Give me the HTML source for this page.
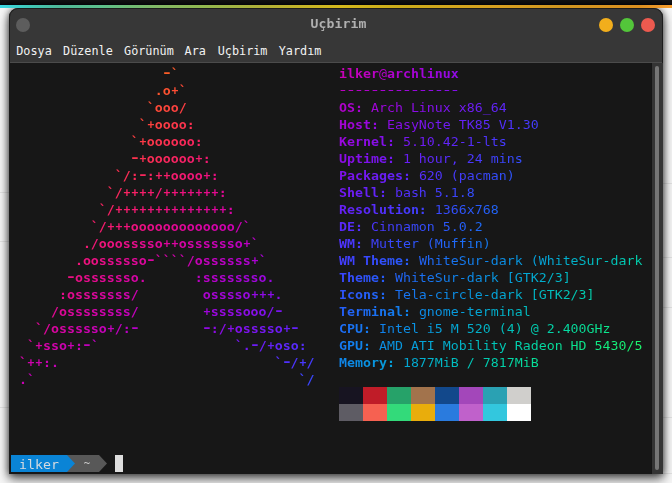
<!DOCTYPE html>
<html lang="tr">
<head>
<meta charset="utf-8">
<title>Uçbirim</title>
<style>
html,body{margin:0;padding:0}
body{width:672px;height:483px;overflow:hidden;position:relative;background:#f6f6f6;font-family:"DejaVu Sans Mono", "Liberation Mono", monospace}
.topblack{position:absolute;left:0;top:0;width:672px;height:5px;background:linear-gradient(180deg,#131313,#0d0d0f 60%,#05050c)}
.grad{position:absolute;left:0;top:4.5px;width:672px;height:3.7px;z-index:2;background:linear-gradient(90deg,#3cd8e4 0px,#40c8b8 30px,#50b898 60px,#5cc08c 100px,#70bc74 130px,#84b864 160px,#90b850 200px,#b0b038 260px,#c4b428 300px,#d4b81c 340px,#ccac1a 400px,#d8a020 500px,#d09620 560px,#dc9020 640px,#f09a2c 662px,#f8a030 672px)}
.win{position:absolute;left:9px;top:8px;width:654px;height:466px;border-radius:9px 9px 0 0;background:#171717;box-shadow:0 5px 11px 0 rgba(0,0,0,.6),0 0 7px 0 rgba(0,0,0,.55);overflow:hidden}
.head{position:absolute;left:0;top:0;width:654px;height:54px;background:#373737;border-bottom:1px solid #4b4b4b}
.edge{position:absolute;left:0;top:0;width:652px;height:480px;border:1px solid #1c1c1c;border-radius:9px 9px 0 0;pointer-events:none}
.title{position:absolute;left:0;top:8px;width:672px;height:32px;line-height:32px;text-align:center;color:#b0b0b0;font-weight:bold;font-size:13.1px;letter-spacing:.1px;text-indent:5px;transform-origin:0 20px;transform:scaleY(.93)}
.dot{position:absolute;width:14px;height:14px;border-radius:50%;top:18px}
.menu{position:absolute;top:41px;left:16.25px;height:20px;line-height:20px;font-size:11.8px;color:#f2f2f2;white-space:pre}
.menu span{position:absolute;top:0}
.r{position:absolute;height:17px;line-height:17px;font-size:13.288px;white-space:pre;transform-origin:0 13px;transform:scaleY(.92)}
.r.g{color:transparent;-webkit-background-clip:text;background-clip:text;background-repeat:no-repeat}
.r i{font-style:normal}
.r i.p{display:inline-block;transform:scaleX(.86)}
.r i.d{display:inline-block;transform:scaleX(1.36) translateY(-.7px)}
.r b,.b{font-weight:bold}
.ln{position:absolute;width:17px;height:1px;background:#e3e3e3}
.blk{position:absolute;width:24px;height:17px}
.sbtrack{position:absolute;left:651px;top:63px;width:11px;height:411px;background:#343434;border-left:1px solid #151515}
.sbthumb{position:absolute;left:655px;top:66px;width:4px;height:404px;border-radius:2px;background:#767676}
.seg{position:absolute;top:455px;height:17px}
</style>
</head>
<body>
<div class="topblack"></div>
<div class="grad"></div>
<div class="ln" style="left:0;top:192px"></div><div class="ln" style="left:0;top:241px"></div><div class="ln" style="left:0;top:407px"></div>
<div class="ln" style="left:655px;top:183px"></div><div class="ln" style="left:655px;top:257px"></div><div class="ln" style="left:655px;top:307px"></div><div class="ln" style="left:655px;top:417px"></div><div class="ln" style="left:655px;top:473px"></div>
<div class="win"><div class="head"></div><div class="edge"></div></div>
<div class="title">Uçbirim</div>
<div class="dot" style="left:16px;background:#5d5d5d"></div>
<div class="dot" style="left:599px;background:#f2ae1c"></div>
<div class="dot" style="left:620px;background:#53c63a"></div>
<div class="dot" style="left:641px;background:#ec5a4f"></div>
<div class="menu"><span style="left:0">Dosya</span><span style="left:46.8px">Düzenle</span><span style="left:107.8px">Görünüm</span><span style="left:168.3px">Ara</span><span style="left:201.5px">Uçbirim</span><span style="left:262.5px">Yardım</span></div>
<div class="r g b" style="top:65px;left:11px;background-image:linear-gradient(90deg,#cfae02 0px,#d5a603 16px,#db9e06 32px,#e19508 48px,#e68d0b 64px,#eb850f 80px,#ef7c13 96px,#f37418 112px,#f66b1d 128px,#f96323 144px,#fb5b29 160px,#fd532f 176px)">                   <i class="d" style="color:#fb5d27">-</i>`</div>
<div class="r g b" style="top:82px;left:11px;background-image:linear-gradient(90deg,#d8a204 0px,#de9a07 16px,#e4910a 32px,#e8890d 48px,#ed8011 64px,#f17815 80px,#f5701a 96px,#f86720 112px,#fa5f25 128px,#fc572c 144px,#fd4f32 160px,#fe4739 176px)">                  .o<i class="p" style="color:#fe4d34">+</i>`</div>
<div class="r g b" style="top:99px;left:11px;background-image:linear-gradient(90deg,#e19508 0px,#e68d0b 16px,#eb850f 32px,#ef7c13 48px,#f37418 64px,#f66b1d 80px,#f96323 96px,#fb5b29 112px,#fd532f 128px,#fe4b36 144px,#fe433d 160px,#fe3c44 176px)">                 `ooo/</div>
<div class="r g b" style="top:116px;left:11px;background-image:linear-gradient(90deg,#e8890d 0px,#ed8011 16px,#f17815 32px,#f5701a 48px,#f86720 64px,#fa5f25 80px,#fc572c 96px,#fd4f32 112px,#fe4739 128px,#fe4040 144px,#fe3948 160px,#fd324f 176px,#fc2b57 192px)">                `<i class="p" style="color:#fe423e">+</i>oooo:</div>
<div class="r g b" style="top:133px;left:11px;background-image:linear-gradient(90deg,#ef7c13 0px,#f37418 16px,#f66b1d 32px,#f96323 48px,#fb5b29 64px,#fd532f 80px,#fe4b36 96px,#fe433d 112px,#fe3c44 128px,#fe354c 144px,#fd2e53 160px,#fb285b 176px,#f92264 192px)">               `<i class="p" style="color:#fe3a46">+</i>oooooo:</div>
<div class="r g b" style="top:150px;left:11px;background-image:linear-gradient(90deg,#f5701a 0px,#f86720 16px,#fa5f25 32px,#fc572c 48px,#fd4f32 64px,#fe4739 80px,#fe4040 96px,#fe3948 112px,#fd324f 128px,#fc2b57 144px,#fa2560 160px,#f71f68 176px,#f41a70 192px,#f11579 208px)">               <i class="d" style="color:#fe334e">-</i><i class="p" style="color:#fd3051">+</i>oooooo<i class="p" style="color:#f51b6e">+</i>:</div>
<div class="r g b" style="top:167px;left:11px;background-image:linear-gradient(90deg,#f96323 0px,#fb5b29 16px,#fd532f 32px,#fe4b36 48px,#fe433d 64px,#fe3c44 80px,#fe354c 96px,#fd2e53 112px,#fb285b 128px,#f92264 144px,#f61d6c 160px,#f31874 176px,#ef137d 192px,#ea0f85 208px)">             `/:<i class="d" style="color:#fa275d">-</i>:<i class="p" style="color:#f82166">+</i><i class="p" style="color:#f71e6a">+</i>oooo<i class="p" style="color:#ee127f">+</i>:</div>
<div class="r g b" style="top:184px;left:11px;background-image:linear-gradient(90deg,#fc572c 0px,#fd4f32 16px,#fe4739 32px,#fe4040 48px,#fe3948 64px,#fd324f 80px,#fc2b57 96px,#fa2560 112px,#f71f68 128px,#f41a70 144px,#f11579 160px,#ed1181 176px,#e80d8a 192px,#e30992 208px,#de079a 224px)">            `/<i class="p" style="color:#f92462">+</i><i class="p" style="color:#f82166">+</i><i class="p" style="color:#f71e6a">+</i><i class="p" style="color:#f51b6e">+</i>/<i class="p" style="color:#f21676">+</i><i class="p" style="color:#f0147b">+</i><i class="p" style="color:#ee127f">+</i><i class="p" style="color:#ec1083">+</i><i class="p" style="color:#e90e87">+</i><i class="p" style="color:#e70c8c">+</i><i class="p" style="color:#e40a90">+</i>:</div>
<div class="r g b" style="top:201px;left:11px;background-image:linear-gradient(90deg,#fe4b36 0px,#fe433d 16px,#fe3c44 32px,#fe354c 48px,#fd2e53 64px,#fb285b 80px,#f92264 96px,#f61d6c 112px,#f31874 128px,#ef137d 144px,#ea0f85 160px,#e60b8e 176px,#e00896 192px,#db059e 208px,#d503a7 224px)">           `/<i class="p" style="color:#f71e6a">+</i><i class="p" style="color:#f51b6e">+</i><i class="p" style="color:#f41972">+</i><i class="p" style="color:#f21676">+</i><i class="p" style="color:#f0147b">+</i><i class="p" style="color:#ee127f">+</i><i class="p" style="color:#ec1083">+</i><i class="p" style="color:#e90e87">+</i><i class="p" style="color:#e70c8c">+</i><i class="p" style="color:#e40a90">+</i><i class="p" style="color:#e20994">+</i><i class="p" style="color:#df0798">+</i><i class="p" style="color:#dc069c">+</i><i class="p" style="color:#d905a0">+</i>:</div>
<div class="r g b" style="top:218px;left:11px;background-image:linear-gradient(90deg,#fe4040 0px,#fe3948 16px,#fd324f 32px,#fc2b57 48px,#fa2560 64px,#f71f68 80px,#f41a70 96px,#f11579 112px,#ed1181 128px,#e80d8a 144px,#e30992 160px,#de079a 176px,#d804a2 192px,#d103ab 208px,#cb01b2 224px,#c401ba 240px)">          `/<i class="p" style="color:#f41972">+</i><i class="p" style="color:#f21676">+</i><i class="p" style="color:#f0147b">+</i>ooooooooooooo/`</div>
<div class="r g b" style="top:235px;left:11px;background-image:linear-gradient(90deg,#fe354c 0px,#fd2e53 16px,#fb285b 32px,#f92264 48px,#f61d6c 64px,#f31874 80px,#ef137d 96px,#ea0f85 112px,#e60b8e 128px,#e00896 144px,#db059e 160px,#d503a7 176px,#ce02ae 192px,#c701b6 208px,#c001be 224px,#b901c5 240px,#b101cc 256px)">         ./ooosssso<i class="p" style="color:#dc069c">+</i><i class="p" style="color:#d905a0">+</i>osssssso<i class="p" style="color:#bb01c3">+</i>`</div>
<div class="r g b" style="top:252px;left:11px;background-image:linear-gradient(90deg,#fc2b57 0px,#fa2560 16px,#f71f68 32px,#f41a70 48px,#f11579 64px,#ed1181 80px,#e80d8a 96px,#e30992 112px,#de079a 128px,#d804a2 144px,#d103ab 160px,#cb01b2 176px,#c401ba 192px,#bd01c1 208px,#b501c8 224px,#ad02cf 240px,#a504d6 256px)">        .oossssso<i class="d" style="color:#d905a0">-</i>````/ossssss<i class="p" style="color:#ab02d1">+</i>`</div>
<div class="r g b" style="top:269px;left:11px;background-image:linear-gradient(90deg,#f92264 0px,#f61d6c 16px,#f31874 32px,#ef137d 48px,#ea0f85 64px,#e60b8e 80px,#e00896 96px,#db059e 112px,#d503a7 128px,#ce02ae 144px,#c701b6 160px,#c001be 176px,#b901c5 192px,#b101cc 208px,#a903d3 224px,#a105d9 240px,#9907df 256px,#910ae4 272px)">       <i class="d" style="color:#ec1083">-</i>osssssso.      :ssssssso.</div>
<div class="r g b" style="top:286px;left:11px;background-image:linear-gradient(90deg,#f41a70 0px,#f11579 16px,#ed1181 32px,#e80d8a 48px,#e30992 64px,#de079a 80px,#d804a2 96px,#d103ab 112px,#cb01b2 128px,#c401ba 144px,#bd01c1 160px,#b501c8 176px,#ad02cf 192px,#a504d6 208px,#9d06dc 224px,#9508e1 240px,#8c0ce6 256px,#840feb 272px)">      :osssssss/        osssso<i class="p" style="color:#9309e3">+</i><i class="p" style="color:#8e0be5">+</i><i class="p" style="color:#8a0de8">+</i>.</div>
<div class="r g b" style="top:303px;left:11px;background-image:linear-gradient(90deg,#ef137d 0px,#ea0f85 16px,#e60b8e 32px,#e00896 48px,#db059e 64px,#d503a7 80px,#ce02ae 96px,#c701b6 112px,#c001be 128px,#b901c5 144px,#b101cc 160px,#a903d3 176px,#a105d9 192px,#9907df 208px,#910ae4 224px,#880de9 240px,#8011ed 256px,#7716f1 272px)">     /ossssssss/        <i class="p" style="color:#9f05da">+</i>ssssooo/<i class="d" style="color:#7915f0">-</i></div>
<div class="r g b" style="top:320px;left:11px;background-image:linear-gradient(90deg,#e80d8a 0px,#e30992 16px,#de079a 32px,#d804a2 48px,#d103ab 64px,#cb01b2 80px,#c401ba 96px,#bd01c1 112px,#b501c8 128px,#ad02cf 144px,#a504d6 160px,#9d06dc 176px,#9508e1 192px,#8c0ce6 208px,#840feb 224px,#7b14ef 240px,#7318f3 256px,#6b1df6 272px,#6223f9 288px)">   `/ossssso<i class="p" style="color:#c201bc">+</i>/:<i class="d" style="color:#b701c7">-</i>        <i class="d" style="color:#9309e3">-</i>:/<i class="p" style="color:#860eea">+</i>osssso<i class="p" style="color:#691ff7">+</i><i class="d" style="color:#6422f9">-</i></div>
<div class="r g b" style="top:337px;left:11px;background-image:linear-gradient(90deg,#e00896 0px,#db059e 16px,#d503a7 32px,#ce02ae 48px,#c701b6 64px,#c001be 80px,#b901c5 96px,#b101cc 112px,#a903d3 128px,#a105d9 144px,#9907df 160px,#910ae4 176px,#880de9 192px,#8011ed 208px,#7716f1 224px,#6f1bf5 240px,#6620f8 256px,#5e26fa 272px,#562cfc 288px,#4e33fe 304px)">  `<i class="p" style="color:#d604a4">+</i>sso<i class="p" style="color:#c901b4">+</i>:<i class="d" style="color:#c201bc">-</i>`                 `.<i class="d" style="color:#6d1cf6">-</i>/<i class="p" style="color:#6422f9">+</i>oso:</div>
<div class="r g b" style="top:354px;left:11px;background-image:linear-gradient(90deg,#d804a2 0px,#d103ab 16px,#cb01b2 32px,#c401ba 48px,#bd01c1 64px,#b501c8 80px,#ad02cf 96px,#a504d6 112px,#9d06dc 128px,#9508e1 144px,#8c0ce6 160px,#840feb 176px,#7b14ef 192px,#7318f3 208px,#6b1df6 224px,#6223f9 240px,#5a29fb 256px,#522ffd 272px,#4a36fe 288px,#433dfe 304px)"> `<i class="p" style="color:#d002ad">+</i><i class="p" style="color:#cd02b0">+</i>:.                           `<i class="d" style="color:#5031fd">-</i>/<i class="p" style="color:#4838fe">+</i>/</div>
<div class="r g b" style="top:371px;left:11px;background-image:linear-gradient(90deg,#ce02ae 0px,#c701b6 16px,#c001be 32px,#b901c5 48px,#b101cc 64px,#a903d3 80px,#a105d9 96px,#9907df 112px,#910ae4 128px,#880de9 144px,#8011ed 160px,#7716f1 176px,#6f1bf5 192px,#6620f8 208px,#5e26fa 224px,#562cfc 240px,#4e33fe 256px,#473afe 272px,#3f41fe 288px,#3848fe 304px)"> .`                                 `/</div>
<div class="r g" style="top:65px;left:339px;background-image:linear-gradient(90deg,#c901b4 0px,#c201bc 16px,#bb01c3 32px,#b301ca 48px,#ab02d1 64px,#a304d7 80px,#9b06dd 96px,#9309e3 112px,#8a0de8 128px)"><b>ilker</b>@<b>archlinux</b></div>
<div class="r g" style="top:82px;left:339px;background-image:linear-gradient(90deg,#be01c0 0px,#b701c7 16px,#af02ce 32px,#a703d4 48px,#9f05da 64px,#9708e0 80px,#8e0be5 96px,#860eea 112px,#7e12ee 128px)"><i class="d" style="color:#bd01c1">-</i><i class="d" style="color:#b901c5">-</i><i class="d" style="color:#b501c8">-</i><i class="d" style="color:#b101cc">-</i><i class="d" style="color:#ad02cf">-</i><i class="d" style="color:#a903d3">-</i><i class="d" style="color:#a504d6">-</i><i class="d" style="color:#a105d9">-</i><i class="d" style="color:#9d06dc">-</i><i class="d" style="color:#9907df">-</i><i class="d" style="color:#9508e1">-</i><i class="d" style="color:#910ae4">-</i><i class="d" style="color:#8c0ce6">-</i><i class="d" style="color:#880de9">-</i><i class="d" style="color:#840feb">-</i></div>
<div class="r g" style="top:99px;left:339px;background-image:linear-gradient(90deg,#b301ca 0px,#ab02d1 16px,#a304d7 32px,#9b06dd 48px,#9309e3 64px,#8a0de8 80px,#8210ec 96px,#7915f0 112px,#711af4 128px,#691ff7 144px,#6025fa 160px,#582bfc 176px)"><b>OS:</b> Arch Linux x86_64</div>
<div class="r g" style="top:116px;left:339px;background-image:linear-gradient(90deg,#a703d4 0px,#9f05da 16px,#9708e0 32px,#8e0be5 48px,#860eea 64px,#7e12ee 80px,#7517f2 96px,#6d1cf6 112px,#6422f9 128px,#5c28fb 144px,#542efd 160px,#4c34fe 176px,#453bfe 192px,#3d43fe 208px)"><b>Host:</b> EasyNote TK85 V1.30</div>
<div class="r g" style="top:133px;left:339px;background-image:linear-gradient(90deg,#9b06dd 0px,#9309e3 16px,#8a0de8 32px,#8210ec 48px,#7915f0 64px,#711af4 80px,#691ff7 96px,#6025fa 112px,#582bfc 128px,#5031fd 144px,#4838fe 160px,#413ffe 176px)"><b>Kernel:</b> 5.10.42-1-lts</div>
<div class="r g" style="top:150px;left:339px;background-image:linear-gradient(90deg,#8e0be5 0px,#860eea 16px,#7e12ee 32px,#7517f2 48px,#6d1cf6 64px,#6422f9 80px,#5c28fb 96px,#542efd 112px,#4c34fe 128px,#453bfe 144px,#3d43fe 160px,#364afe 176px,#2f52fd 192px)"><b>Uptime:</b> 1 hour, 24 mins</div>
<div class="r g" style="top:167px;left:339px;background-image:linear-gradient(90deg,#8210ec 0px,#7915f0 16px,#711af4 32px,#691ff7 48px,#6025fa 64px,#582bfc 80px,#5031fd 96px,#4838fe 112px,#413ffe 128px,#3a46fe 144px,#334efe 160px,#2c56fc 176px)"><b>Packages:</b> 620 (pacman)</div>
<div class="r g" style="top:184px;left:339px;background-image:linear-gradient(90deg,#7517f2 0px,#6d1cf6 16px,#6422f9 32px,#5c28fb 48px,#542efd 64px,#4c34fe 80px,#453bfe 96px,#3d43fe 112px,#364afe 128px,#2f52fd 144px)"><b>Shell:</b> bash 5.1.8</div>
<div class="r g" style="top:201px;left:339px;background-image:linear-gradient(90deg,#691ff7 0px,#6025fa 16px,#582bfc 32px,#5031fd 48px,#4838fe 64px,#413ffe 80px,#3a46fe 96px,#334efe 112px,#2c56fc 128px,#265efa 144px,#2066f8 160px)"><b>Resolution:</b> 1366x768</div>
<div class="r g" style="top:218px;left:339px;background-image:linear-gradient(90deg,#5c28fb 0px,#542efd 16px,#4c34fe 32px,#453bfe 48px,#3d43fe 64px,#364afe 80px,#2f52fd 96px,#295afb 112px,#2362f9 128px,#1d6bf6 144px)"><b>DE:</b> Cinnamon 5.0.2</div>
<div class="r g" style="top:235px;left:339px;background-image:linear-gradient(90deg,#5031fd 0px,#4838fe 16px,#413ffe 32px,#3a46fe 48px,#334efe 64px,#2c56fc 80px,#265efa 96px,#2066f8 112px,#1b6ff5 128px,#1677f1 144px,#1180ed 160px)"><b>WM:</b> Mutter (Muffin)</div>
<div class="r g" style="top:252px;left:339px;background-image:linear-gradient(90deg,#453bfe 0px,#3d43fe 16px,#364afe 32px,#2f52fd 48px,#295afb 64px,#2362f9 80px,#1d6bf6 96px,#1873f3 112px,#147bef 128px,#0f84eb 144px,#0c8ce7 160px,#0895e1 176px,#069ddc 192px,#04a5d6 208px,#02adcf 224px,#01b5c9 240px,#01bdc1 256px,#01c4ba 272px,#01cbb2 288px,#02d1ab 304px)"><b>WM Theme:</b> WhiteSur-dark (WhiteSur-dark</div>
<div class="r g" style="top:269px;left:339px;background-image:linear-gradient(90deg,#3a46fe 0px,#334efe 16px,#2c56fc 32px,#265efa 48px,#2066f8 64px,#1b6ff5 80px,#1677f1 96px,#1180ed 112px,#0d88e9 128px,#0a91e4 144px,#0799df 160px,#05a1d9 176px,#03a9d3 192px,#01b1cc 208px,#01b9c5 224px,#01c0be 240px)"><b>Theme:</b> WhiteSur-dark [GTK2/3]</div>
<div class="r g" style="top:286px;left:339px;background-image:linear-gradient(90deg,#2f52fd 0px,#295afb 16px,#2362f9 32px,#1d6bf6 48px,#1873f3 64px,#147bef 80px,#0f84eb 96px,#0c8ce7 112px,#0895e1 128px,#069ddc 144px,#04a5d6 160px,#02adcf 176px,#01b5c9 192px,#01bdc1 208px,#01c4ba 224px,#01cbb2 240px,#02d1ab 256px)"><b>Icons:</b> Tela-circle-dark [GTK2/3]</div>
<div class="r g" style="top:303px;left:339px;background-image:linear-gradient(90deg,#265efa 0px,#2066f8 16px,#1b6ff5 32px,#1677f1 48px,#1180ed 64px,#0d88e9 80px,#0a91e4 96px,#0799df 112px,#05a1d9 128px,#03a9d3 144px,#01b1cc 160px,#01b9c5 176px,#01c0be 192px)"><b>Terminal:</b> gnome-terminal</div>
<div class="r g" style="top:320px;left:339px;background-image:linear-gradient(90deg,#1d6bf6 0px,#1873f3 16px,#147bef 32px,#0f84eb 48px,#0c8ce7 64px,#0895e1 80px,#069ddc 96px,#04a5d6 112px,#02adcf 128px,#01b5c9 144px,#01bdc1 160px,#01c4ba 176px,#01cbb2 192px,#02d1ab 208px,#04d8a3 224px,#07de9a 240px,#09e392 256px,#0de88a 272px)"><b>CPU:</b> Intel i5 M 520 (4) @ 2.400GHz</div>
<div class="r g" style="top:337px;left:339px;background-image:linear-gradient(90deg,#1677f1 0px,#1180ed 16px,#0d88e9 32px,#0a91e4 48px,#0799df 64px,#05a1d9 80px,#03a9d3 96px,#01b1cc 112px,#01b9c5 128px,#01c0be 144px,#01c7b6 160px,#02ceaf 176px,#03d5a7 192px,#05db9e 208px,#08e096 224px,#0be68e 240px,#0fea85 256px,#13ef7d 272px,#17f374 288px,#1df66c 304px)"><b>GPU:</b> AMD ATI Mobility Radeon HD 5430/5</div>
<div class="r g" style="top:354px;left:339px;background-image:linear-gradient(90deg,#0f84eb 0px,#0c8ce7 16px,#0895e1 32px,#069ddc 48px,#04a5d6 64px,#02adcf 80px,#01b5c9 96px,#01bdc1 112px,#01c4ba 128px,#01cbb2 144px,#02d1ab 160px,#04d8a3 176px,#07de9a 192px,#09e392 208px)"><b>Memory:</b> 1877MiB / 7817MiB</div>
<div class="blk" style="left:339px;top:387px;background:#171421"></div>
<div class="blk" style="left:363px;top:387px;background:#c01c28"></div>
<div class="blk" style="left:387px;top:387px;background:#26a269"></div>
<div class="blk" style="left:411px;top:387px;background:#a2734c"></div>
<div class="blk" style="left:435px;top:387px;background:#12488b"></div>
<div class="blk" style="left:459px;top:387px;background:#a347ba"></div>
<div class="blk" style="left:483px;top:387px;background:#2aa1b3"></div>
<div class="blk" style="left:507px;top:387px;background:#d0cfcc"></div>
<div class="blk" style="left:339px;top:404px;background:#5e5c64"></div>
<div class="blk" style="left:363px;top:404px;background:#f66151"></div>
<div class="blk" style="left:387px;top:404px;background:#33da7a"></div>
<div class="blk" style="left:411px;top:404px;background:#e9ad0c"></div>
<div class="blk" style="left:435px;top:404px;background:#2a7bde"></div>
<div class="blk" style="left:459px;top:404px;background:#c061cb"></div>
<div class="blk" style="left:483px;top:404px;background:#33c7de"></div>
<div class="blk" style="left:507px;top:404px;background:#ffffff"></div>
<div class="sbtrack"></div><div class="sbthumb"></div>
<svg class="seg" style="left:11px" width="112" height="17" viewBox="0 0 112 17"><rect x="0" y="0" width="56" height="17" fill="#0a84d6"/><rect x="56" y="0" width="32" height="17" fill="#585858"/><polygon points="56,0 64,8.5 56,17" fill="#0a84d6"/><polygon points="88,0 96,8.5 88,17" fill="#585858"/><rect x="104" y="0" width="8" height="17" fill="#dedede"/></svg>
<div class="r" style="top:456px;left:11px;color:#d4dae0"> ilker   <span style="color:#cfcfcf;display:inline-block;transform:scale(.8) translateY(-1px)">~</span> </div>
</body>
</html>
